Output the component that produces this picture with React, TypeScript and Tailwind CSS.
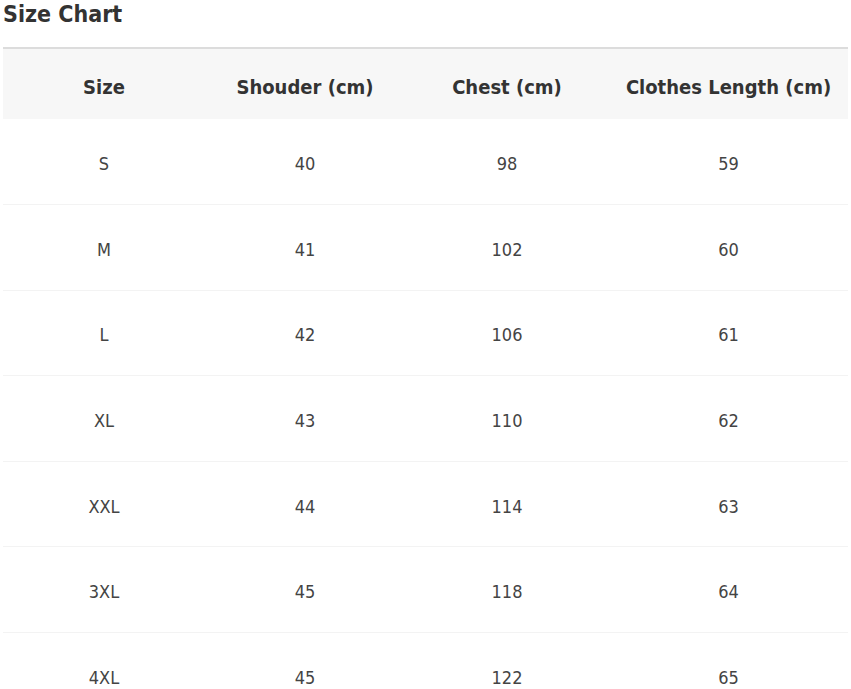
const rows = [
  ["S", "40", "98", "59"],
  ["M", "41", "102", "60"],
  ["L", "42", "106", "61"],
  ["XL", "43", "110", "62"],
  ["XXL", "44", "114", "63"],
  ["3XL", "45", "118", "64"],
  ["4XL", "45", "122", "65"],
];

const headers = ["Size", "Shouder (cm)", "Chest (cm)", "Clothes Length (cm)"];
const widths = ["w-[202px]", "w-[200px]", "w-[204px]", "w-[239px]"];

export default function App() {
  return (
    <div className="h-[689px] w-[851px] overflow-hidden bg-white pl-[3px] pr-[3px] pt-[1px] text-[#444] [font-family:'DejaVu_Sans_Condensed','DejaVu_Sans',Tahoma,sans-serif]">
      <h2 className="h-[46px] text-[23px] font-bold leading-[26px] text-[#333]">Size Chart</h2>
      <table className="w-[845px] table-fixed border-collapse border-t-2 border-[#dcdcdc]">
        <thead>
          <tr className="h-[71px] bg-[#f7f7f7]">
            {headers.map((h, i) => (
              <th key={h} className={`${widths[i]} pt-[5px] text-center text-[20px] font-bold text-[#333]`}>
                {h}
              </th>
            ))}
          </tr>
        </thead>
        <tbody>
          {rows.map((r) => (
            <tr key={r[0]} className="h-[85.6px] border-b border-[#f3f3f3]">
              {r.map((c, i) => (
                <td key={i} className="pt-[4px] text-center text-[18px]">
                  {c}
                </td>
              ))}
            </tr>
          ))}
        </tbody>
      </table>
    </div>
  );
}
